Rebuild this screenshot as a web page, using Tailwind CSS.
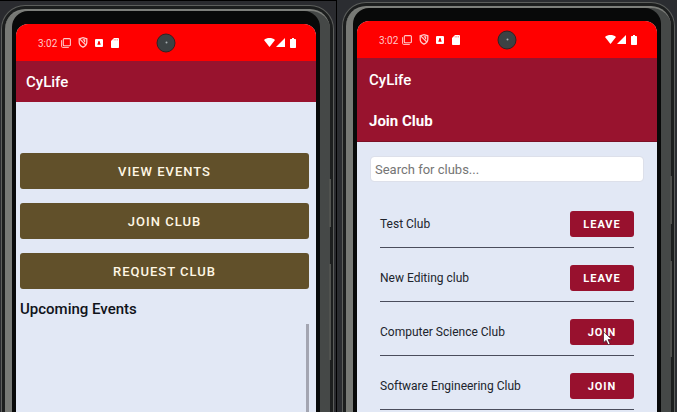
<!DOCTYPE html>
<html lang="en">
<head>
<meta charset="utf-8">
<meta name="viewport" content="width=device-width, initial-scale=1">
<title>CyLife</title>
<script src="https://cdn.jsdelivr.net/npm/@tailwindcss/browser@4"></script>
</head>
<body class="bg-[#2a2c2f] font-[Roboto,sans-serif]">
<svg class="hidden" aria-hidden="true">
  <symbol id="stack" viewBox="0 0 10 10"><rect x="2.3" y=".6" width="7.100" height="7.100" rx="1" fill="none" stroke="currentColor" stroke-width="1.100"/><path d="M.6 2.200v6.200a1 1 0 0 0 1 1h6.200" fill="none" stroke="currentColor" stroke-width="1"/></symbol>
  <symbol id="shield" viewBox="0 0 10 11"><path d="M1.200 1.800 5 .7l3.800 1.100v3.400c0 2.400-1.600 4-3.800 5-2.200-1-3.800-2.600-3.800-5z" fill="none" stroke="currentColor" stroke-width="1.300"/><path d="m1.600 1.800 6.200 6.200M4.800 2.800h1.800v2.400" fill="none" stroke="currentColor" stroke-width="1.200"/></symbol>
  <symbol id="letter" viewBox="0 0 8 8"><path fill="currentColor" fill-rule="evenodd" d="M1 0h6a1 1 0 0 1 1 1v6a1 1 0 0 1-1 1H1a1 1 0 0 1-1-1V1a1 1 0 0 1 1-1zm2.500 2L2.300 5.800h3.400L4.500 2z"/></symbol>
  <symbol id="card" viewBox="0 0 8 10"><path fill="currentColor" d="M3 0h4.200a.8.8 0 0 1 .8.8v8.400a.8.8 0 0 1-.8.8H.8a.8.8 0 0 1-.8-.8V3z"/><path stroke="#f00" stroke-width=".4" d="M3.200 1v1.500M4.800 1v1.500M6.400 1v1.500"/></symbol>
  <symbol id="wifi" viewBox="0 0 11 9"><path fill="currentColor" d="M0 2C3-.6 8-.6 11 2L5.500 9z"/></symbol>
  <symbol id="signal" viewBox="0 0 9 9"><path fill="currentColor" d="M9 0v9H0z"/></symbol>
  <symbol id="battery" viewBox="0 0 6 10"><path fill="currentColor" d="M2 0h2v1h1.300a.7.7 0 0 1 .7.700v7.600a.7.7 0 0 1-.7.700H.7a.7.7 0 0 1-.7-.7V1.700A.7.7 0 0 1 .7 1H2z"/></symbol>
</svg>

<main class="grid h-screen grid-cols-[337fr_340fr] overflow-hidden">

  <section class="flex min-h-0 border-t border-r border-black bg-[#2a2b2f] pt-1 pr-0.5 pl-px">
    <div class="relative flex flex-1 rounded-t-[24px] border-x border-t border-[#5c5e5c] bg-[#1c1e1e] px-[3px] pt-[3px]">
      <i class="absolute top-[173px] right-0.5 h-12 w-0.5 bg-[#50524f]"></i>
      <i class="absolute top-[258px] right-0.5 h-24 w-0.5 bg-[#50524f]"></i>
      <div class="flex flex-1 rounded-t-[20px] border-t-2 border-[#7d7f7b] bg-linear-to-r from-[#777975] from-50% to-[#454847] to-50% pr-2.5 pl-[7px]">
        <div class="flex flex-1 rounded-t-[16px] bg-[#080909] px-1 pt-[13px]">
          <div class="flex min-w-0 flex-1 flex-col overflow-hidden rounded-t-[12px] bg-[#e2e8f5]">
            <div class="relative flex h-[37px] shrink-0 items-center bg-[#ff0000] pr-5 pl-[22px] text-[#ffc9c9]">
              <span class="w-[23px] pt-0.5 text-[10px]">3:02</span>
              <svg class="mr-[7px] h-2.5 w-2.5"><use href="#stack"/></svg>
              <svg class="mr-[7px] h-[11px] w-2.5"><use href="#shield"/></svg>
              <svg class="mr-2 h-2 w-2 text-white"><use href="#letter"/></svg>
              <svg class="h-2.5 w-2 text-white"><use href="#card"/></svg>
              <i class="absolute top-1/2 left-1/2 flex size-[19px] -translate-1/2 items-center justify-center rounded-full border border-[#302425] bg-[#3c4244]"><b class="size-0.5 rounded-full bg-[#a5adb0]"></b></i>
              <svg class="mr-px ml-auto h-[9px] w-[11px] text-white"><use href="#wifi"/></svg>
              <svg class="mr-[5px] h-[9px] w-[9px] text-white"><use href="#signal"/></svg>
              <svg class="h-2.5 w-1.5 text-white"><use href="#battery"/></svg>
            </div>
            <header class="flex h-[41px] shrink-0 items-center bg-[#98132e] pt-0.5 pl-2.5 text-white">
              <h1 class="text-[15px] font-medium">CyLife</h1>
            </header>
            <div class="flex min-h-0 flex-1 flex-col pt-[51px] pr-[7px] pl-1">
              <nav class="flex flex-col gap-3.5">
                <button class="h-9 rounded-[3px] bg-[#61502a] pt-0.5 text-[13px] font-medium tracking-[1px] text-[#fff7e4]">VIEW EVENTS</button>
                <button class="h-9 rounded-[3px] bg-[#61502a] pt-0.5 text-[13px] font-medium tracking-[1px] text-[#fff7e4]">JOIN CLUB</button>
                <button class="h-9 rounded-[3px] bg-[#61502a] pt-0.5 text-[13px] font-medium tracking-[1px] text-[#fff7e4]">REQUEST CLUB</button>
              </nav>
              <h2 class="mt-2.5 text-[15px]/5 font-medium text-[#10131a]">Upcoming Events</h2>
              <div class="mt-[5px] flex-1 border-r-3 border-[#a3a5b1]"></div>
            </div>
          </div>
        </div>
      </div>
    </div>
  </section>

  <section class="flex min-h-0 bg-[#2b2d31] pt-0.5 pr-0.5 pl-[5px]">
    <div class="relative flex flex-1 rounded-t-[24px] border-x border-t border-[#5c5e5c] bg-[#1c1e1e] px-[3px] pt-[3px]">
      <i class="absolute top-[173px] right-0.5 h-12 w-0.5 bg-[#50524f]"></i>
      <i class="absolute top-[258px] right-0.5 h-24 w-0.5 bg-[#50524f]"></i>
      <div class="flex flex-1 rounded-t-[20px] border-t-2 border-[#7d7f7b] bg-linear-to-r from-[#777975] from-50% to-[#454847] to-50% pr-2.5 pl-[7px]">
        <div class="flex flex-1 rounded-t-[16px] bg-[#080909] px-1 pt-[13px]">
          <div class="flex min-w-0 flex-1 flex-col overflow-hidden rounded-t-[12px] bg-[#e2e8f5]">
            <div class="relative flex h-[37px] shrink-0 items-center bg-[#ff0000] pr-5 pl-[22px] text-[#ffc9c9]">
              <span class="w-[23px] pt-0.5 text-[10px]">3:02</span>
              <svg class="mr-[7px] h-2.5 w-2.5"><use href="#stack"/></svg>
              <svg class="mr-[7px] h-[11px] w-2.5"><use href="#shield"/></svg>
              <svg class="mr-2 h-2 w-2 text-white"><use href="#letter"/></svg>
              <svg class="h-2.5 w-2 text-white"><use href="#card"/></svg>
              <i class="absolute top-1/2 left-1/2 flex size-[19px] -translate-1/2 items-center justify-center rounded-full border border-[#302425] bg-[#3c4244]"><b class="size-0.5 rounded-full bg-[#a5adb0]"></b></i>
              <svg class="mr-px ml-auto h-[9px] w-[11px] text-white"><use href="#wifi"/></svg>
              <svg class="mr-[5px] h-[9px] w-[9px] text-white"><use href="#signal"/></svg>
              <svg class="h-2.5 w-1.5 text-white"><use href="#battery"/></svg>
            </div>
            <header class="shrink-0 border-b border-[#7c1026] bg-[#98132e] pl-3 text-white">
              <h1 class="flex h-[42px] items-center pt-0.5 text-[15px] font-medium">CyLife</h1>
              <h2 class="flex h-[41px] items-center pt-0.5 text-[15px] font-bold">Join Club</h2>
            </header>
            <div class="flex min-h-0 flex-1 flex-col overflow-hidden pt-[15px] pr-3.5 pl-3.5">
              <input type="text" aria-label="Search for clubs" placeholder="Search for clubs..." class="h-6 w-full shrink-0 rounded-[3px] bg-white px-1 text-[13px] text-[#222] outline outline-[#dde0ea] placeholder:text-[#757575]">
              <ul class="mt-[13px] px-[9px] text-[12px] text-[#20242c]">
                <li class="flex h-[54px] items-end justify-between border-b border-[#4a4d5c] pb-2.5"><span class="pt-0.5 leading-[25px]">Test Club</span><button class="h-[26px] w-16 rounded-[3px] bg-[#98112e] pt-0.5 text-[11px] font-bold tracking-[1px] text-white">LEAVE</button></li>
                <li class="flex h-[54px] items-end justify-between border-b border-[#4a4d5c] pb-2.5"><span class="pt-0.5 leading-[25px]">New Editing club</span><button class="h-[26px] w-16 rounded-[3px] bg-[#98112e] pt-0.5 text-[11px] font-bold tracking-[1px] text-white">LEAVE</button></li>
                <li class="flex h-[54px] items-end justify-between border-b border-[#4a4d5c] pb-2.5"><span class="pt-0.5 leading-[25px]">Computer Science Club</span><button class="relative h-[26px] w-16 rounded-[3px] bg-[#98112e] pt-0.5 text-[11px] font-bold tracking-[1px] text-white">JOIN<svg class="absolute top-3 left-[33px] h-[15px] w-[10px]" viewBox="0 0 10 15"><path d="M.5.7v11l2.600-2.300 2 4.400 2-.9-2-4.300h3.800z" fill="#fff" stroke="#3a1020" stroke-width=".7"/></svg></button></li>
                <li class="flex h-[54px] items-end justify-between border-b border-[#4a4d5c] pb-2.5"><span class="pt-0.5 leading-[25px]">Software Engineering Club</span><button class="h-[26px] w-16 rounded-[3px] bg-[#98112e] pt-0.5 text-[11px] font-bold tracking-[1px] text-white">JOIN</button></li>
              </ul>
            </div>
          </div>
        </div>
      </div>
    </div>
  </section>
</main>
</body>
</html>
